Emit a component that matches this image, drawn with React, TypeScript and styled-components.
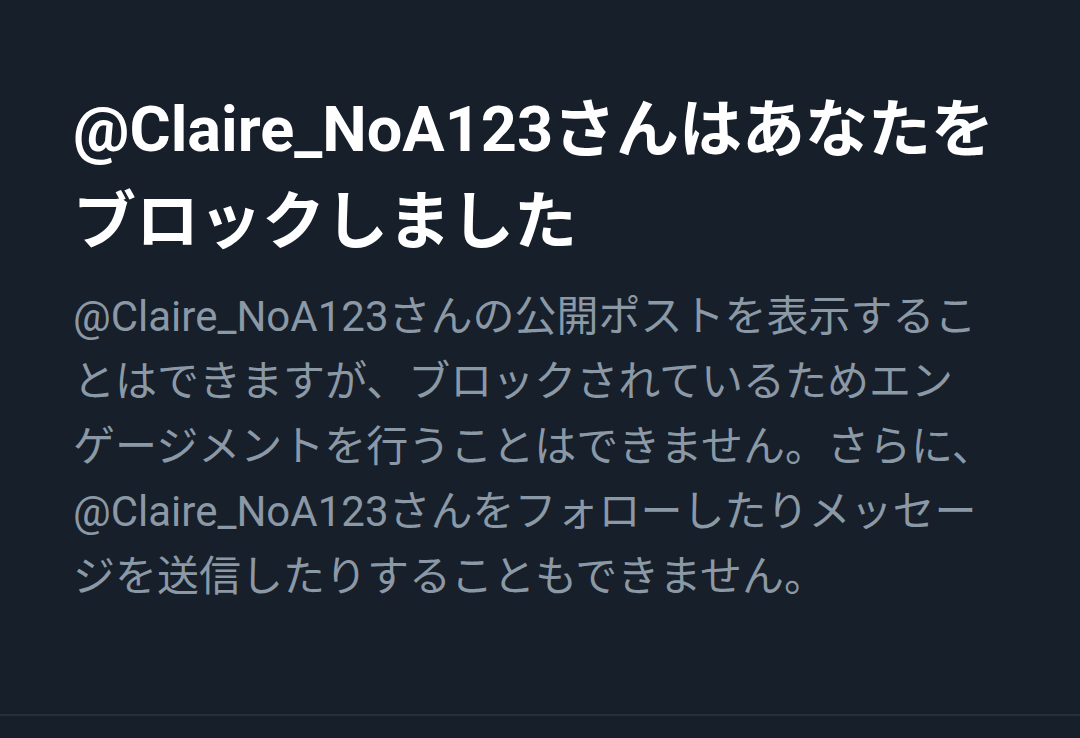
import React from "react";
import styled, { createGlobalStyle } from "styled-components";

const Global = createGlobalStyle`
  html, body {
    margin: 0;
    padding: 0;
    background: #161f2a;
  }
  #root {
    min-height: 738px;
    background: #161f2a;
  }
`;

const Page = styled.div`
  display: flex;
  flex-direction: column;
  min-height: 738px;
  background: #161f2a;
`;

const Section = styled.section`
  display: flex;
  flex-direction: column;
  gap: 16px;
  height: 716px;
  box-sizing: border-box;
  padding: 84px 72px 0 73px;
  border-bottom: 2px solid #252f3a;
`;

const Title = styled.h1`
  margin: 0;
  font-family: Roboto, "Noto Sans CJK JP", sans-serif;
  font-weight: 700;
  font-size: 63px;
  line-height: 92px;
  color: #ffffff;
  letter-spacing: 0;
`;

const Body = styled.p`
  margin: 0;
  max-width: 930px;
  line-break: strict;
  font-family: Roboto, "Noto Sans CJK JP", sans-serif;
  font-weight: 400;
  font-size: 42px;
  line-height: 65px;
  color: #8b98a5;
`;

const Keep = styled.span`
  white-space: nowrap;
`;

export default function App() {
  return (
    <Page>
      <Global />
      <Section>
        <Title>@Claire_NoA123さんはあなたをブロックしました</Title>
        <Body>
          @Claire_NoA123さんの公開ポストを表示することはできますが、ブロックされているためエン<Keep>ゲー</Keep>ジメントを行うことはできません。さらに、@Claire_NoA123さんをフォローしたりメッセージを送信したりすることもできません。
        </Body>
      </Section>
    </Page>
  );
}
